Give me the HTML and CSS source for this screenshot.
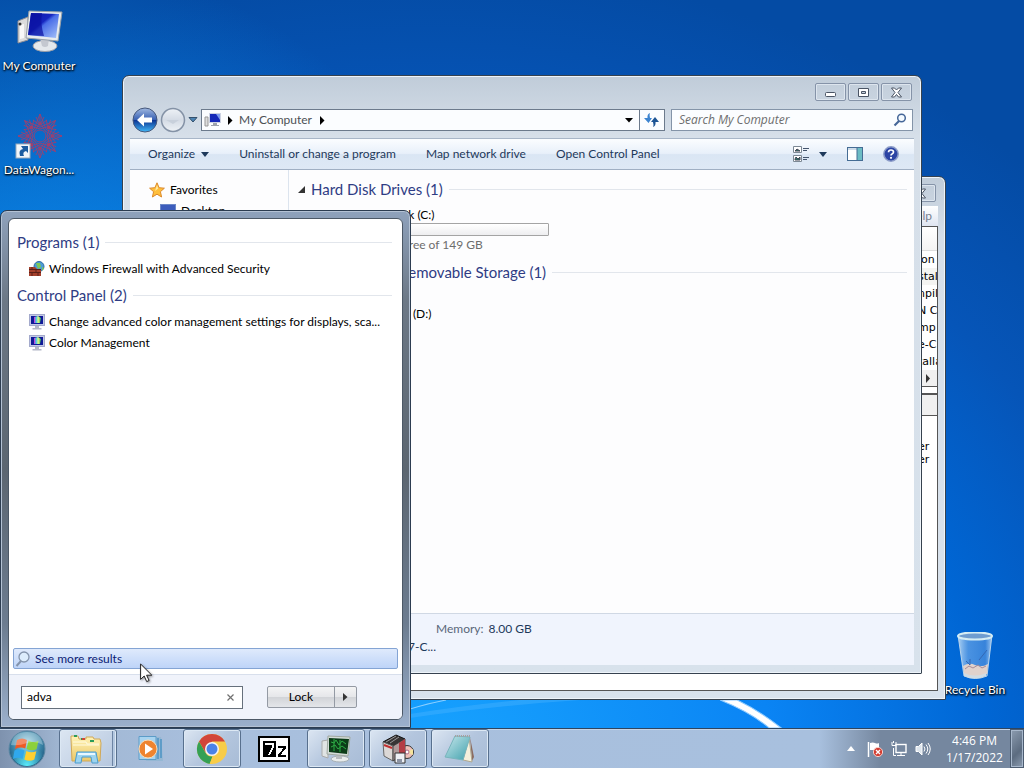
FILE: index.html
```html
<!DOCTYPE html>
<html lang="en">
<head>
    <meta charset="UTF-8">
    <meta name="viewport" content="width=device-width, initial-scale=1.0">
    <title>Desktop</title>
    <link rel="stylesheet" href="styles.css">
</head>
<body>
    <!-- shared icon shapes -->
    <svg class="defs" width="0" height="0" aria-hidden="true">
        <defs>
            <linearGradient id="screen" x1="0" y1="0" x2="1" y2="1">
                <stop offset="0" stop-color="#0a12a8"/>
                <stop offset=".42" stop-color="#1626c0"/>
                <stop offset=".5" stop-color="#4a6ee8"/>
                <stop offset="1" stop-color="#a8c4fa"/>
            </linearGradient>
            <linearGradient id="spectrum">
                <stop offset="0" stop-color="#e82ad0"/>
                <stop offset=".3" stop-color="#38c8f0"/>
                <stop offset=".6" stop-color="#e8f880"/>
                <stop offset="1" stop-color="#28b858"/>
            </linearGradient>
            <linearGradient id="glass" x1="0" y1="0" x2="1" y2="0">
                <stop offset="0" stop-color="#d8ecfa" stop-opacity=".8"/>
                <stop offset=".3" stop-color="#7cb0ea" stop-opacity=".6"/>
                <stop offset=".8" stop-color="#5c98e0" stop-opacity=".6"/>
                <stop offset="1" stop-color="#d0e6fa" stop-opacity=".8"/>
            </linearGradient>
            <linearGradient id="page" x1="0" y1="0" x2="1" y2="1">
                <stop offset="0" stop-color="#c8e8ec"/>
                <stop offset="1" stop-color="#3fa0ac"/>
            </linearGradient>
            <linearGradient id="folder" x1="0" y1="0" x2="0" y2="1">
                <stop offset="0" stop-color="#fff4b8"/>
                <stop offset="1" stop-color="#ecc868"/>
            </linearGradient>
            <radialGradient id="orb" cx=".5" cy=".35" r=".65">
                <stop offset="0" stop-color="#a8d8e8"/>
                <stop offset=".6" stop-color="#3a86a8"/>
                <stop offset="1" stop-color="#1c5078"/>
            </radialGradient>
            <radialGradient id="shine" cx=".5" cy="1" r=".6">
                <stop offset="0" stop-color="#5cf0ff"/>
                <stop offset="1" stop-color="#5cf0ff" stop-opacity="0"/>
            </radialGradient>
            <linearGradient id="back" x1="0" y1="0" x2="0" y2="1">
                <stop offset="0" stop-color="#a0b8e0"/>
                <stop offset=".48" stop-color="#3a62b4"/>
                <stop offset=".5" stop-color="#0c3290"/>
                <stop offset="1" stop-color="#40b8f8"/>
            </linearGradient>
            <linearGradient id="fwd" x1="0" y1="0" x2="0" y2="1">
                <stop offset="0" stop-color="#eef2f7"/>
                <stop offset=".5" stop-color="#d4dbe5"/>
                <stop offset="1" stop-color="#eef2f6"/>
            </linearGradient>
            <symbol id="color-monitor" viewBox="0 0 16 16">
                <rect x=".5" y=".5" width="15" height="11" fill="#c4cae6" stroke="#a4aacc"/>
                <rect x="2" y="2" width="12" height="8" fill="#101a98"/>
                <path d="M5 3l4-1 3 2-1 5H5z" fill="url(#spectrum)"/>
                <path d="M6 12h4v2h2.500v1.500h-9V14H6z" fill="#b4b8c8"/>
            </symbol>
        </defs>
    </svg>

    <main class="desktop">
        <svg class="streaks" viewBox="0 0 614 28" preserveAspectRatio="none" aria-hidden="true">
            <path d="M0 9Q20 3 36 0" fill="none" stroke="#8ccfff" stroke-width="1"/>
            <path d="M0 18Q80 6 170 0H110Q50 6 0 14z" fill="#4cb4ff" opacity=".4"/>
            <path d="M310 0Q340 12 359 28H371Q348 10 327 0z" fill="#fff" stroke="#8ccaff" stroke-width="1"/>
        </svg>

        <div class="icons">
            <a class="shortcut" href="#computer">
                <svg width="48" height="48" viewBox="2 0 48 48" aria-hidden="true">
                    <path d="M5 13l10-4v23L5 35z" fill="#dcdcdc" stroke="#8e8e96"/>
                    <path d="M7 17l4-1v14l-4 1z" fill="#f8f8f8"/>
                    <circle cx="7" cy="16" r="1.500" fill="#333"/>
                    <ellipse cx="32" cy="38" rx="12" ry="5.500" fill="#e4e8ec" stroke="#9a9ea8"/>
                    <path d="M27 30h9l-1 8q-3 2-6 0z" fill="#c4c8d0"/>
                    <path d="M16 3l33 1-4 29-32-3z" fill="#e8ecee" stroke="#98a0a8"/>
                    <path d="M18 5l28 1-3 24-28-3z" fill="url(#screen)"/>
                    <path d="M18 5h11q-2 10 2 23l-16-1z" fill="#0a10a0" opacity=".7"/>
                </svg>
                <span>My Computer</span>
            </a>
            <a class="shortcut" href="#datawagon">
                <svg width="48" height="48" viewBox="0 0 48 48" aria-hidden="true">
                    <defs>
                        <g id="spike">
                            <path d="M19 17L25 2l6 15M18 8l7 5 7-5M21 5l4 8 4-8M25 2v14M20 19l5-9 5 9" />
                        </g>
                    </defs>
                    <g fill="none" stroke="#a83c68" stroke-width=".8">
                        <use href="#spike"/>
                        <use href="#spike" transform="rotate(45 25 24)"/>
                        <use href="#spike" transform="rotate(90 25 24)"/>
                        <use href="#spike" transform="rotate(135 25 24)"/>
                        <use href="#spike" transform="rotate(180 25 24)"/>
                        <use href="#spike" transform="rotate(225 25 24)"/>
                        <use href="#spike" transform="rotate(270 25 24)"/>
                        <use href="#spike" transform="rotate(315 25 24)"/>
                        <circle cx="25" cy="24" r="6"/>
                    </g>
                    <rect x="1" y="32" width="14" height="14" fill="#f2f6fa" stroke="#9cacbc"/>
                    <path d="M5 44q-2-6 3-7l-2-3h7v7l-2-2q-4 1-2 5z" fill="#1c5ca0"/>
                </svg>
                <span>DataWagon...</span>
            </a>
        </div>

        <a class="shortcut recycle" href="#recycle">
            <svg width="48" height="48" viewBox="0 0 48 48" aria-hidden="true">
                <path d="M7 3h34l-5 41q-12 5-23 0z" fill="url(#glass)" stroke="#b8d4ec"/>
                <path d="M12 34q6-4 12-1t13-1l-1 10q-12 5-23 0z" fill="#e0d2cc"/>
                <path d="M19 27v6l-4-4M28 28l8-10" stroke="#3468b4" fill="none"/>
                <path d="M14 37l4-3 4 2 5-3 4 3 4-2" fill="none" stroke="#a88c98"/>
                <ellipse cx="24" cy="4" rx="17" ry="3.500" fill="#6e9cd0" stroke="#d4ecf4" stroke-width="2"/>
                <path d="M13 41q11 5 22 0v3q-11 5-22 0z" fill="#d0dce4"/>
            </svg>
            <span>Recycle Bin</span>
        </a>

        <!-- window at the back -->
        <section class="window back-window">
            <div class="title-bar">
                <button class="caption-btn" aria-label="Close">
                    <svg width="13" height="11" viewBox="0 0 13 11"><path d="M1.500 1h3l2 2 2-2h3L8 5.500l3.500 4.500h-3l-2-2.500-2 2.500h-3L5 5.500z" fill="#fff" stroke="#4a5464"/></svg>
                </button>
            </div>
            <div class="menu-bar">Help</div>
            <div class="back-body">
                <div class="back-head"></div>
                <ul class="back-list">
                    <li>ion</li>
                    <li class="selected">stal</li>
                    <li>npil</li>
                    <li>N C</li>
                    <li>mp</li>
                    <li>e-C</li>
                    <li>talla</li>
                </ul>
                <div class="back-scroll">
                    <svg width="6" height="9" viewBox="0 0 6 9"><path d="M1 0l4 4.500L1 9z" fill="#333"/></svg>
                </div>
                <div class="splitter"></div>
                <div class="back-head second"></div>
                <ul class="back-log">
                    <li>er</li>
                    <li>er</li>
                </ul>
            </div>
        </section>

        <section class="window explorer">
            <div class="title-bar">
                <button class="caption-btn" aria-label="Minimize">
                    <svg width="13" height="11" viewBox="0 0 13 11"><rect x="1.500" y="5.500" width="10" height="4" rx="1" fill="#fff" stroke="#4a5464"/></svg>
                </button>
                <button class="caption-btn" aria-label="Maximize">
                    <svg width="13" height="11" viewBox="0 0 13 11"><path d="M1.500 1.500h10v8h-10zM4.500 4.500v2h4v-2z" fill="#fff" stroke="#4a5464" fill-rule="evenodd"/></svg>
                </button>
                <button class="caption-btn" aria-label="Close">
                    <svg width="13" height="11" viewBox="0 0 13 11"><path d="M1.500 1h3l2 2 2-2h3L8 5.500l3.500 4.500h-3l-2-2.500-2 2.500h-3L5 5.500z" fill="#fff" stroke="#4a5464"/></svg>
                </button>
            </div>

            <div class="nav-row">
                <div class="travel">
                    <button aria-label="Back">
                        <svg width="26" height="26" viewBox="0 0 26 26"><circle cx="13" cy="13" r="12" fill="url(#back)" stroke="#46587c"/><path d="M5 13l7-6.500v4h8v5h-8v4z" fill="#fff"/></svg>
                    </button>
                    <button aria-label="Forward">
                        <svg width="26" height="26" viewBox="0 0 26 26"><circle cx="13" cy="13" r="11.500" fill="url(#fwd)" stroke="#8492a6" stroke-width="1.500"/><path d="M6 13h13l-6 4z" fill="#c8d0db"/></svg>
                    </button>
                    <button aria-label="Recent pages">
                        <svg width="10" height="8" viewBox="0 0 10 8"><path d="M1 1.500h8L5 6z" fill="#4c84b4" stroke="#34506c"/></svg>
                    </button>
                </div>
                <div class="address">
                    <svg width="18" height="16" viewBox="0 0 18 16" aria-hidden="true">
                        <path d="M1 5h3v9H1z" fill="#ddd" stroke="#999"/>
                        <rect x="5" y="1" width="12" height="10" fill="#ccd2e2"/>
                        <rect x="6" y="2" width="10" height="8" fill="#1428b8"/>
                        <path d="M12 2h4v6z" fill="#7c9cf0"/>
                        <path d="M9 11h4v2h2v1H7v-1h2z" fill="#9ca2ac"/>
                    </svg>
                    <svg class="crumb" width="5" height="9" viewBox="0 0 5 9"><path d="M0 0l4.500 4.500L0 9z"/></svg>
                    <button class="place">My Computer</button>
                    <svg class="crumb" width="5" height="9" viewBox="0 0 5 9"><path d="M0 0l4.500 4.500L0 9z"/></svg>
                    <button class="previous" aria-label="Previous locations">
                        <svg width="8" height="5" viewBox="0 0 8 5"><path d="M0 0h8L4 4.500z"/></svg>
                    </button>
                    <button class="refresh" aria-label="Refresh">
                        <svg width="15" height="14" viewBox="0 0 15 14"><path d="M6 0Q3 1 3.500 5H0l4.500 5L8 5H6q-1-3 0-5z" fill="#3c84d0"/><path d="M9 14q3-1 2.500-5H15l-4-5-4 5h2q1 3 0 5z" fill="#1c5494"/></svg>
                    </button>
                </div>
                <label class="search">
                    <input type="text" placeholder="Search My Computer" aria-label="Search My Computer">
                    <svg width="14" height="14" viewBox="0 0 14 14"><circle cx="8.500" cy="5" r="3.800" fill="#f4faff" stroke="#456698" stroke-width="1.500"/><path d="M6 8l-4.500 4.500" stroke="#456698" stroke-width="2.200"/></svg>
                </label>
            </div>

            <div class="client">
                <div class="toolbar">
                    <button>Organize <svg width="8" height="5" viewBox="0 0 8 5"><path d="M0 0h8L4 5z" fill="#1e395b"/></svg></button>
                    <button>Uninstall or change a program</button>
                    <button>Map network drive</button>
                    <button>Open Control Panel</button>
                    <div class="tools">
                        <button aria-label="Change your view">
                            <svg width="17" height="16" viewBox="0 0 17 16"><path d="M.5.500h8v6h-8zM.5 9.500h8v6h-8z" fill="#fff" stroke="#7c8894"/><path d="M2 5l2-2 3 2zM2 13l1-2 2 2 2-2v3H2z" fill="#28806c" stroke="#445"/><path d="M10 2.500h6M10 4.500h4M10 11.500h6M10 13.500h4" stroke="#44546c"/></svg>
                            <svg width="8" height="5" viewBox="0 0 8 5"><path d="M0 0h8L4 5z" fill="#1e395b"/></svg>
                        </button>
                        <button aria-label="Show the preview pane">
                            <svg width="16" height="14" viewBox="0 0 16 14"><rect x=".5" y=".5" width="15" height="13" fill="#fff" stroke="#456c94"/><path d="M1 2h9" stroke="#9cb8d4"/><path d="M10 1h5v12h-5z" fill="#6cbcc4"/><path d="M10 1v12" stroke="#456c94"/></svg>
                        </button>
                        <button aria-label="Get help">
                            <svg width="16" height="16" viewBox="0 0 16 16"><circle cx="8" cy="8" r="7.200" fill="#2c44a4" stroke="#8c9cc8" stroke-width="1.500"/><path d="M5.500 6.200Q5.600 4 8 4t2.500 2Q10.500 7.200 9 8q-1 .5-1 1.600" fill="none" stroke="#fff" stroke-width="1.700"/><circle cx="8" cy="11.800" r="1.100" fill="#fff"/></svg>
                        </button>
                    </div>
                </div>

                <div class="panes">
                    <nav class="side">
                        <a href="#favorites">
                            <svg width="16" height="16" viewBox="0 0 16 16"><path d="M8 .8l2.100 4.900 5.300.5-4 3.500 1.200 5.300L8 12.200 3.400 15l1.200-5.300-4-3.500 5.300-.5z" fill="#ffbf3c" stroke="#dc8a2c"/><path d="M8 3l1.200 3.500L6 9z" fill="#ffe9a4"/></svg>
                            Favorites
                        </a>
                        <a class="sub" href="#desktop">
                            <svg width="16" height="14" viewBox="0 0 16 14"><rect x=".5" y=".5" width="15" height="13" fill="#3c5cbc" stroke="#6c88c8"/></svg>
                            Desktop
                        </a>
                    </nav>
                    <div class="drives">
                        <h2><svg width="7" height="7" viewBox="0 0 7 7"><path d="M7 0v7H0z" fill="#333"/></svg>Hard Disk Drives (1)</h2>
                        <div class="drive">
                            <span>Local Disk (C:)</span>
                            <div class="meter"></div>
                            <span class="free">128 GB free of 149 GB</span>
                        </div>
                        <h2>Devices with Removable Storage (1)</h2>
                        <div class="drive optical">
                            <span>CD Drive (D:)</span>
                        </div>
                    </div>
                </div>

                <div class="details">
                    <dl>
                        <dt>Memory:</dt>
                        <dd>8.00 GB</dd>
                    </dl>
                    <p>Intel(R) i7-C...</p>
                </div>
            </div>
        </section>

        <section class="start-menu">
            <div class="start-panel">
                <div class="results">
                    <h2>Programs (1)</h2>
                    <ul>
                        <li><a href="#firewall">
                            <svg width="16" height="16" viewBox="0 0 16 16"><circle cx="10" cy="5.500" r="5" fill="#4c9cd8" stroke="#2c6ca0"/><path d="M7 2l4 0 1 4-3 2zM13 6l2 1-2 3z" fill="#7cc858"/><path d="M0 6h6l2 2h4v7H0z" fill="#a4402c"/><path d="M0 8.500h12M0 11.500h12M3 6v2.500M7 8.500v3M3 11.500V15M9 11.500V15" stroke="#5c2018"/></svg>
                            Windows Firewall with Advanced Security</a></li>
                    </ul>
                    <h2>Control Panel (2)</h2>
                    <ul>
                        <li><a href="#advanced-color">
                            <svg width="16" height="16"><use href="#color-monitor"/></svg>
                            Change advanced color management settings for displays, sca...</a></li>
                        <li><a href="#color">
                            <svg width="16" height="16"><use href="#color-monitor"/></svg>
                            Color Management</a></li>
                    </ul>
                    <a class="more" href="#more">
                        <svg width="16" height="16" viewBox="0 0 16 16"><circle cx="9" cy="6" r="5" fill="#dcecfc" stroke="#8494ac" stroke-width="1.300"/><path d="M6 10l-4.500 5" stroke="#8494ac" stroke-width="2"/></svg>
                        See more results
                    </a>
                </div>
                <div class="start-footer">
                    <div class="start-search">
                        <input type="text" value="adva" aria-label="Search programs and files">
                        <button aria-label="Clear search"><svg width="7" height="7" viewBox="0 0 7 7"><path d="M.5.500l6 6m0-6l-6 6" stroke="#707070" stroke-width="1.200"/></svg></button>
                    </div>
                    <div class="power">
                        <button class="lock">Lock</button>
                        <button class="lock-more" aria-label="More options"><svg width="5" height="8" viewBox="0 0 5 8"><path d="M0 0l4.500 4L0 8z" fill="#333"/></svg></button>
                    </div>
                </div>
            </div>
        </section>

        <svg class="cursor" width="13" height="20" viewBox="0 0 13 20" aria-hidden="true"><path d="M.6 1v15.400l3.600-3.400 2.500 5.600 2.400-1.100-2.500-5.300h5.200z" fill="#fff" stroke="#222"/></svg>
    </main>

    <footer class="taskbar">
        <button class="start-orb" aria-label="Start">
            <svg width="38" height="38" viewBox="0 0 38 38">
                <circle cx="19" cy="19" r="18" fill="url(#orb)" stroke="#5c88a4"/>
                <circle cx="19" cy="19" r="17" fill="url(#shine)"/>
                <path d="M9 10q5-3 10 0l-1.700 8.500q-5-2-10.300.5z" fill="#ee5a24"/>
                <path d="M20.500 10.500q5 3 10 .3l-2 8.500q-5 2-10-.3z" fill="#8cd03c"/>
                <path d="M6.500 20.500q5-2.500 10 0l-2 8.500q-4.500-2.500-9.500 0z" fill="#30a8ec"/>
                <path d="M18.300 21q5 2.500 10 .3l-2 8.300q-5 2.500-10-.2z" fill="#ffd030"/>
                <path d="M3 15Q5 2 19 2t16 13q-8-5-16-2T3 15z" fill="#fff" opacity=".3"/>
            </svg>
        </button>
        <div class="tasks">
            <button class="task open stacked" aria-label="Windows Explorer">
                <svg width="34" height="32" viewBox="0 0 34 32">
                    <path d="M2 6V3h7l1 3h7V4h7l1 2h6l1 4-1 18H3z" fill="url(#folder)" stroke="#d0a858"/>
                    <path d="M5 3h3M12 6h4M21 8h4" stroke="#2c9c5c" stroke-width="2"/>
                    <path d="M13 6h3" stroke="#d04838" stroke-width="2"/>
                    <path d="M4 9h13l1 2h12M4 12h26" stroke="#fffbe0" fill="none"/>
                    <path d="M6 30l2-11h19l2 11h-6l-1-6H13l-1 6z" fill="#9cd4f0" stroke="#4c9ccc"/>
                    <path d="M9 20h17v2H9z" fill="#e8f8ff"/>
                </svg>
            </button>
            <button class="task" aria-label="Windows Media Player">
                <svg width="30" height="28" viewBox="0 0 30 28">
                    <path d="M9 2h17l2 24H11z" fill="#88b4d0" opacity=".6"/>
                    <path d="M4 1.500h17v23H4z" fill="#a8d4f0" stroke="#5c9cc8"/>
                    <path d="M23 3v21M26 4v19" stroke="#4c94c4" stroke-width="1.500"/>
                    <circle cx="13" cy="14" r="9" fill="#ee8430" stroke="#f8dcb8"/>
                    <path d="M10 8.500l8 5.500-8 5.500z" fill="#fff"/>
                </svg>
            </button>
            <button class="task open" aria-label="Google Chrome">
                <svg width="32" height="32" viewBox="0 0 32 32">
                    <circle cx="16" cy="16" r="15" fill="#f8cc48"/>
                    <path d="M3 8.500A15 15 0 0 1 29 8.500H16l-6.500 11z" fill="#d2453a"/>
                    <path d="M3 8.500L9.500 19.700Q12 24 16.500 23.500L14 31A15 15 0 0 1 3 8.500z" fill="#35a055"/>
                    <path d="M22.500 19.700L16 31h-2.500l3-7.500z" fill="#f8cc48"/>
                    <circle cx="16" cy="16" r="7" fill="#f4f4f4"/>
                    <circle cx="16" cy="16" r="5.500" fill="#4a82e8"/>
                </svg>
            </button>
            <button class="task" aria-label="7-Zip">
                <svg width="32" height="26" viewBox="0 0 32 26" shape-rendering="crispEdges">
                    <rect x="1" y="1" width="30" height="24" fill="#fff" stroke="#000" stroke-width="2"/>
                    <rect x="5" y="5" width="13" height="16" fill="#000"/>
                    <path d="M7 8h8v3l-4 8" fill="none" stroke="#fff" stroke-width="2"/>
                    <path d="M20 11h7v1l-6 7v1h7" fill="none" stroke="#000" stroke-width="2"/>
                </svg>
            </button>
            <button class="task open" aria-label="System monitor">
                <svg width="32" height="30" viewBox="0 0 32 30">
                    <path d="M2 7l6-1v18l-6-2z" fill="#e0e4e4" stroke="#aaa"/>
                    <ellipse cx="20" cy="25" rx="9" ry="3" fill="#e8ecec" stroke="#a8b0b4"/>
                    <path d="M16 20h6v5h-6z" fill="#b8bcc0"/>
                    <path d="M8 2l22 1-2 19-21-2z" fill="#d4dcd8" stroke="#a0a8a0"/>
                    <path d="M9 4l20 1-2 15-18-2z" fill="#0c3c18"/>
                    <path d="M11 8l3 1 2-3 3 5 3-4 4 3M11 13l4-2 3 4 4-3 4 3M14 5v12M20 6v12" fill="none" stroke="#2cac44"/>
                </svg>
            </button>
            <button class="task open" aria-label="Software installer">
                <svg width="32" height="32" viewBox="0 0 32 32">
                    <circle cx="25" cy="19" r="6.500" fill="#eec0b8" stroke="#333"/>
                    <path d="M25 19l6-3v6z" fill="#f4e49c"/>
                    <circle cx="25" cy="19" r="2" fill="#fff" stroke="#a68"/>
                    <path d="M1 9l13-7 9 4-12 7z" fill="#383434" stroke="#111"/>
                    <path d="M1 9l10 4v15L2 23z" fill="#dcd8d6" stroke="#666"/>
                    <path d="M11 13l12-7v14l-12 8z" fill="#b09a9a" stroke="#444"/>
                    <path d="M17 10l6-4v14l-6 3z" fill="#b43c44"/>
                    <path d="M2 12l8 3" stroke="#c03030" stroke-width="2"/>
                    <path d="M14 3L4 9M17 4L8 10" stroke="#999"/>
                    <path d="M13 20h10v10H13z" fill="#eef0f4" stroke="#333"/>
                    <path d="M15 26h5v4h-5z" fill="#8c94a4"/>
                </svg>
            </button>
            <button class="task open" aria-label="Notepad">
                <svg width="34" height="30" viewBox="0 0 34 30">
                    <path d="M27 3l4 20-2 4z" fill="#8c6c60"/>
                    <path d="M26 3l3 25-9-2z" fill="#f4f0dc" stroke="#b0a890"/>
                    <path d="M12 2l15 1-7 23L2 23z" fill="url(#page)" stroke="#78b4bc"/>
                    <path d="M12 2h15" stroke="#a8a0a0" stroke-width="2" stroke-dasharray="1 1"/>
                </svg>
            </button>
        </div>
        <div class="tray">
            <button aria-label="Show hidden icons"><svg width="8" height="5" viewBox="0 0 8 5"><path d="M4 0l4 5H0z" fill="#fff"/></svg></button>
            <button aria-label="Action Center">
                <svg width="16" height="16" viewBox="0 0 16 16"><path d="M1.500 1v15" stroke="#fff" stroke-width="1.500"/><path d="M3 2q3-1 5 0t4 0v7H3z" fill="#fff"/><circle cx="11" cy="11" r="4.600" fill="#d43c30" stroke="#f4d0cc"/><path d="M9 9l4 4m0-4l-4 4" stroke="#fff" stroke-width="1.400"/></svg>
            </button>
            <button aria-label="Network">
                <svg width="16" height="16" viewBox="0 0 16 16" fill="none" stroke="#fff"><rect x="5" y="3.500" width="10" height="8" stroke-width="1.400"/><path d="M10 12v2M6 14.500h8M2.500 7v7.500H5M1 1v3.500h4V1M2.500 0v2"/></svg>
            </button>
            <button aria-label="Volume">
                <svg width="16" height="16" viewBox="0 0 16 16" fill="none" stroke="#fff"><path d="M1 5.500h2.500L7 2v12l-3.500-3.500H1z" fill="#dce4ec"/><path d="M9 5.500q2 2.500 0 5M11 3.500q3.500 4.500 0 9M13 2q4.500 6 0 12"/></svg>
            </button>
            <button class="clock"><span>4:46 PM</span><span>1/17/2022</span></button>
        </div>
        <button class="show-desktop" aria-label="Show desktop"></button>
    </footer>
</body>
</html>
```
FILE: styles.css
```css
* {
  margin: 0;
  padding: 0;
  box-sizing: border-box;
}

/* Page */
body {
  font-family: Lato, "Open Sans", sans-serif;
  font-size: 12px;
  line-height: 16px;
  color: #000;
  height: 100vh;
  display: flex;
  flex-direction: column;
  overflow: hidden;
}

button {
  font: inherit;
  color: inherit;
  border: none;
  background: none;
}

input {
  font: inherit;
  color: inherit;
  border: none;
  outline: none;
  background: none;
  min-width: 0;
}

a {
  color: inherit;
  text-decoration: none;
}

ul {
  list-style: none;
}

svg {
  display: block;
  flex-shrink: 0;
}

.defs {
  position: absolute;
}

/* Desktop */
.desktop {
  flex: 1;
  position: relative;
  min-height: 0;
  background:
    radial-gradient(ellipse 420px 400px at 5% 50%, #0a90f0, rgba(10, 144, 240, 0)),
    radial-gradient(ellipse 900px 800px at 42% 105%, #18a4ff 0%, #0a84f4 38%, #0066d4 62%, #0655b8 80%, #044ba4 100%);
}

.streaks {
  position: absolute;
  left: 40%;
  right: 0;
  bottom: 0;
  width: 60%;
  height: 28px;
}

.icons {
  position: absolute;
  left: 0;
  top: 8px;
  display: flex;
  flex-direction: column;
  gap: 37px;
}

.shortcut {
  width: 78px;
  display: flex;
  flex-direction: column;
  align-items: center;
  gap: 1px;
  line-height: 18px;
  color: #fff;
  text-shadow: 1px 1px 2px #000, 0 1px 2px #000;
  white-space: nowrap;
}

.recycle {
  position: absolute;
  right: 10px;
  bottom: 29px;
}

/* Windows */
.window {
  position: absolute;
  display: flex;
  flex-direction: column;
  border: 1px solid #36424f;
  border-radius: 7px 7px 1px 1px;
  padding: 0 7px 8px;
  background: linear-gradient(#c0ccd9, #d6dfe9 60px, #d8e2ec);
  box-shadow: inset 0 0 0 1px #eef4fa;
}

.title-bar {
  display: flex;
  justify-content: flex-end;
  gap: 2px;
  padding: 7px 2px 0 0;
}

.caption-btn {
  width: 31px;
  height: 18px;
  display: flex;
  align-items: center;
  justify-content: center;
  border: 1px solid #8593a8;
  border-radius: 2px;
  box-shadow: inset 0 0 0 1px #dde5ee;
}

/* Back window */
.back-window {
  left: 240px;
  right: 78px;
  top: 176px;
  bottom: 28px;
}

.menu-bar {
  height: 20px;
  margin-top: 4px;
  padding-right: 6px;
  background: linear-gradient(#fff, #dfe5f1);
  color: #777f90;
  line-height: 20px;
  text-align: right;
}

.back-body {
  flex: 1;
  min-height: 0;
  border: 1px solid #555;
  background: #fff;
  font-family: "DejaVu Sans", sans-serif;
  font-size: 11px;
}

.back-head {
  height: 24px;
  background: linear-gradient(#fff, #f4f4f4);
  border-bottom: 1px solid #ddd;
}

.back-head.second {
  height: 21px;
  background: #f0f0f0;
  border-bottom: 1px solid #555;
}

.back-list,
.back-log {
  display: flex;
  flex-direction: column;
  align-items: flex-end;
}

.back-list li,
.back-log li {
  width: 19px;
  height: 17px;
  line-height: 17px;
  overflow: hidden;
  white-space: nowrap;
}

.back-list .selected {
  background: #f4f4f2;
}

.back-scroll {
  height: 17px;
  display: flex;
  align-items: center;
  justify-content: flex-end;
  padding-right: 6px;
  background: #f0f0f0;
  border-bottom: 1px solid #555;
}

.splitter {
  height: 8px;
  border-bottom: 2px solid #555;
}

.back-log {
  padding-top: 24px;
}

.back-log li {
  height: 13px;
  line-height: 13px;
}

/* Explorer window */
.explorer {
  left: 122px;
  right: 102px;
  top: 75px;
  bottom: 54px;
}

.nav-row {
  display: flex;
  align-items: center;
  gap: 3px;
  height: 26px;
  margin: 6px 1px 5px 2px;
}

.travel {
  display: flex;
  align-items: center;
  gap: 2px;
}

.address {
  flex: 1;
  display: flex;
  align-items: center;
  height: 22px;
  padding-left: 2px;
  background: #fbfdff;
  border: 1px solid #6c7a8c;
  color: #4c5055;
}

.crumb {
  margin: 0 6px;
}

.place + .crumb {
  margin-left: 8px;
}

.previous {
  margin-left: auto;
  padding: 6px;
}

.refresh {
  display: flex;
  align-items: center;
  justify-content: center;
  width: 25px;
  height: 20px;
  border-left: 1px solid #6c7a8c;
}

.search {
  width: 31%;
  display: flex;
  align-items: center;
  height: 22px;
  margin-left: 3px;
  padding: 0 5px 0 7px;
  background: #fbfdff;
  border: 1px solid #8494a8;
  font-family: "Open Sans", sans-serif;
}

.search input {
  flex: 1;
  font-style: italic;
}

.search input::placeholder {
  color: #6d6d6d;
  opacity: 1;
}

.client {
  flex: 1;
  min-height: 0;
  display: flex;
  flex-direction: column;
}

.toolbar {
  display: flex;
  align-items: center;
  gap: 30px;
  height: 32px;
  padding: 0 15px 0 18px;
  background: linear-gradient(#fbfdff, #e8f0fa 48%, #dae6f4 52%, #dee8f5);
  border-top: 1px solid #a8b6c8;
  border-bottom: 1px solid #a0afc3;
  color: #1e395b;
}

.toolbar button {
  display: flex;
  align-items: center;
  gap: 6px;
  white-space: nowrap;
}

.tools {
  display: flex;
  gap: 20px;
  margin-left: auto;
}

.tools button:first-child {
  gap: 9px;
}

.panes {
  flex: 1;
  min-height: 0;
  display: flex;
  background: #fdfdfe;
}

.side {
  width: 159px;
  padding: 9px 0 0 19px;
  border-right: 1px solid #dce4ee;
}

.side a {
  display: flex;
  align-items: center;
  gap: 5px;
  height: 21px;
}

.side .sub {
  padding-left: 11px;
}

.drives {
  flex: 1;
  padding: 7px 7px 0 9px;
}

h2 {
  display: flex;
  align-items: center;
  height: 24px;
  font-size: 15px;
  font-weight: normal;
  color: #2f3c84;
  white-space: nowrap;
}

h2::after {
  content: "";
  flex: 1;
  height: 1px;
  margin-left: 6px;
  background: #e2e6ec;
}

.drives h2 svg {
  margin-right: 6px;
}

.drives .drive + h2 {
  padding-left: 13px;
}

.drive {
  display: flex;
  flex-direction: column;
  height: 59px;
  padding: 5px 0 0 63px;
  line-height: 17px;
}

.optical {
  padding-top: 21px;
}

.meter {
  width: 188px;
  height: 13px;
  border: 1px solid #a4a4a4;
  border-radius: 1px;
  background: linear-gradient(#fff, #eeeef0);
}

.free {
  color: #6d6d6d;
}

.details {
  height: 52px;
  padding: 6px 0 0 306px;
  background: #f0f4fd;
  border-top: 1px solid #d0d8e4;
  line-height: 18px;
  color: #1e395b;
}

.details dl {
  display: flex;
  gap: 5px;
}

.details dt {
  color: #5a6779;
}

.details p {
  width: 0;
  display: flex;
  justify-content: flex-end;
  white-space: nowrap;
}

/* Start menu */
.start-menu {
  position: absolute;
  left: 0;
  bottom: 0;
  width: 411px;
  height: 518px;
  padding: 7px;
  display: flex;
  border: 1px solid #2c3c50;
  border-radius: 7px 7px 0 0;
  background: linear-gradient(#8fa2bc, #6c7886 90px, #5c6671 50%, #6c7c90 80%, #9bb0cc);
  box-shadow: inset 0 0 0 1px #b4c2d4;
}

.start-panel {
  flex: 1;
  display: flex;
  flex-direction: column;
  border: 1px solid #4c5866;
  border-radius: 6px;
  overflow: hidden;
  background: #fff;
}

.results {
  flex: 1;
  display: flex;
  flex-direction: column;
  padding: 11px 4px 5px;
}

.results h2 {
  padding: 0 6px 0 4px;
}

.results ul {
  padding: 4px 0 4px 16px;
}

.results li a {
  display: flex;
  align-items: center;
  gap: 4px;
  height: 21px;
  white-space: nowrap;
}

.more {
  display: flex;
  align-items: center;
  gap: 4px;
  height: 21px;
  margin-top: auto;
  padding-left: 1px;
  border: 1px solid #84a4d4;
  border-radius: 2px;
  background: linear-gradient(#dfeafc, #bed4f8);
  color: #0c1c74;
}

.start-footer {
  display: flex;
  align-items: center;
  gap: 24px;
  height: 45px;
  padding: 0 12px;
  background: #f0f3fb;
  border-top: 1px solid #d8dfec;
}

.start-search {
  display: flex;
  align-items: center;
  width: 222px;
  height: 23px;
  padding: 0 8px 0 5px;
  border: 1px solid #66707c;
  background: #fff;
}

.start-search input {
  flex: 1;
}

.power {
  display: flex;
  height: 22px;
  border: 1px solid #949aa4;
  border-radius: 2px;
  background: linear-gradient(#f4f4f5, #e6e7ea 48%, #d2d4d8 52%, #e4e6ea);
}

.lock {
  width: 66px;
}

.lock-more {
  display: flex;
  align-items: center;
  justify-content: center;
  width: 22px;
  border-left: 1px solid #949aa4;
}

.cursor {
  position: absolute;
  left: 140px;
  bottom: 45px;
  filter: drop-shadow(1px 1px 1px rgba(0, 0, 0, 0.4));
}

/* Taskbar */
.taskbar {
  display: flex;
  height: 40px;
  border-top: 1px solid #2e4560;
  background: linear-gradient(to right, #7e92ae, #a0b6d2 60px, #a8bfdd 200px, #a8c0de 80%, #75879f 86%, #75879f);
  box-shadow: inset 0 1px 0 #c4d4e8;
}

.start-orb {
  width: 53px;
  padding-left: 8px;
}

.tasks {
  display: flex;
  gap: 4px;
  padding-left: 6px;
}

.task {
  width: 58px;
  height: 39px;
  display: flex;
  align-items: center;
  justify-content: center;
}

.task.open {
  border: 1px solid #58708e;
  border-radius: 3px;
  background: linear-gradient(135deg, #dce6f2, #b4c6de 50%, #a8bcd6);
  box-shadow: inset 0 0 0 1px #dce8f4;
}

.task.stacked {
  padding-right: 4px;
  background: linear-gradient(to right, transparent 52px, #6c84a4 52px, #6c84a4 53px, #b4c8e0 53px), linear-gradient(135deg, #dce6f2, #b4c6de);
}

.tray {
  display: flex;
  align-items: center;
  gap: 8px;
  margin-left: auto;
  color: #fff;
}

.tray button:first-child {
  margin-right: 4px;
}

.clock {
  display: flex;
  flex-direction: column;
  align-items: center;
  width: 71px;
  font-family: "Open Sans", sans-serif;
  line-height: 17px;
}

.show-desktop {
  width: 14px;
  border: 1px solid #4c5c70;
  background: linear-gradient(135deg, #8c9cb0, #5c6c80 60%, #8c9cb0);
  box-shadow: inset 0 0 0 1px #a8b8cc;
}
```
